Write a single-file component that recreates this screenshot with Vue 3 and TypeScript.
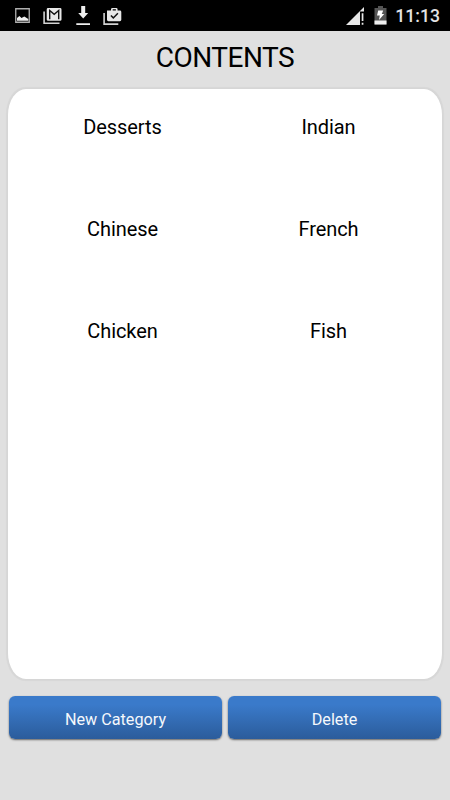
<script setup lang="ts">
const categories: string[] = ['Desserts', 'Indian', 'Chinese', 'French', 'Chicken', 'Fish']
const actions: string[] = ['New Category', 'Delete']
</script>

<template>
  <div class="screen">
    <header class="status">
      <div class="notifications">
        <svg width="16" height="16" viewBox="0 0 16 16">
          <path d="M.75 .75h13.5v13.5H.75z" fill="none" stroke="#b0b0b0" stroke-width="1.3" />
          <path d="M2 12.700V10l2.400-2 2.100 2 2.800-1.500 4 2.500v1.700z" fill="#eee" />
        </svg>
        <svg width="19" height="18" viewBox="0 0 19 18">
          <path d="M1.100 3.500V15.200H16.500" fill="none" stroke="#d2d2d2" stroke-width="1.6" />
          <path d="M3.700 1.500q0-1.400 1.400-1.400h12q1.400 0 1.400 1.400v9.900q0 1.400-1.400 1.400H5.100q-1.400 0-1.400-1.400z" fill="#e8e8e8" />
          <path d="M6.700 11.200V2.500l4.500 3.800 4.500-3.800v8.700" fill="none" stroke="#111" stroke-width="1.4" />
        </svg>
        <svg width="15" height="20" viewBox="0 0 15 20">
          <path d="M5.200 1h4v7h3l-5 5.500-5-5.500h3zM.3 18.300h13.700v1.700H.3z" fill="#eee" />
        </svg>
        <svg width="19" height="19" viewBox="0 0 19 19">
          <path d="M1.100 5V16.100h14.200" fill="none" stroke="#d2d2d2" stroke-width="1.6" />
          <path fill-rule="evenodd" d="M4 2.500h4V1.400Q8 0 9.400 0h3.800q1.400 0 1.400 1.400v1.100h2.300q1.400 0 1.400 1.400v7.900q0 1.400-1.400 1.400H5.400Q4 13.200 4 11.800zM9.700 2.500h3.200V1.300H9.700z" fill="#e8e8e8" />
          <path d="m7.900 7.500 2.400 2.400 4.600-4.700" fill="none" stroke="#111" stroke-width="1.5" />
        </svg>
      </div>
      <div class="system">
        <svg class="signal" width="19" height="18" viewBox="0 0 19 18">
          <path d="M0 18 18 0v4.500h-4V18z" fill="#e8e8e8" />
          <path d="M15.700 6.300h1.700v7.800h-1.700zm0 9.500h1.700v2h-1.700z" fill="#e8e8e8" />
        </svg>
        <svg class="battery" width="13" height="19" viewBox="0 0 13 19">
          <path d="M.5 2H4V0h5v2h3.500v16.500H.5z" fill="#555" />
          <path d="M.5 14.500h12v4H.5z" fill="#eee" />
          <path d="M4.200 4.500h5L7.800 8h2.400L5 14l.8-4.500H3z" fill="#fff" />
        </svg>
        <span class="time">11:13</span>
      </div>
    </header>

    <h1>CONTENTS</h1>

    <main class="panel">
      <button v-for="name in categories" :key="name" class="category">{{ name }}</button>
    </main>

    <footer class="actions">
      <button v-for="label in actions" :key="label" class="action">{{ label }}</button>
    </footer>
  </div>
</template>

<style>
body {
  margin: 0;
  background: #e0e0e0;
}
</style>

<style scoped>
.screen {
  box-sizing: border-box;
  width: 450px;
  height: 800px;
  display: flex;
  flex-direction: column;
  overflow: hidden;
  background: #e0e0e0;
  font-family: Roboto, sans-serif;
}
.status {
  box-sizing: border-box;
  height: 31px;
  flex: none;
  display: flex;
  justify-content: space-between;
  padding: 0 10px 0 15px;
  background: #000;
}
.notifications {
  display: flex;
  align-items: flex-start;
  padding-top: 8px;
}
.notifications svg:nth-child(2) {
  margin-left: 12px;
}
.notifications svg:nth-child(3) {
  margin: -3px 0 0 14px;
}
.notifications svg:nth-child(4) {
  margin-left: 12px;
}
.system {
  display: flex;
  align-items: flex-start;
}
.signal {
  margin-top: 7px;
}
.battery {
  margin: 6px 0 0 9px;
}
.time {
  margin-left: 8px;
  color: #e4e4e4;
  font-size: 17.6px;
  font-weight: 500;
  line-height: 33px;
}
h1 {
  flex: none;
  height: 58px;
  margin: 0;
  color: #000;
  font-size: 28px;
  font-weight: 400;
  line-height: 54px;
  letter-spacing: -0.5px;
  text-align: center;
}
.panel {
  box-sizing: border-box;
  flex: none;
  height: 590px;
  margin: 0 8px;
  padding: 0 11px;
  display: grid;
  grid-template-columns: 1fr 1fr;
  grid-auto-rows: 102px;
  align-content: start;
  border-radius: 18px / 26px;
  background: #fff;
  box-shadow: 0 0 1px 1.5px rgba(0, 0, 0, 0.045);
}
.category {
  align-self: start;
  height: 76px;
  margin: 0;
  padding: 0 0 0 1px;
  border: 0;
  background: none;
  color: #000;
  font: 400 20px/76px Roboto, sans-serif;
  letter-spacing: -0.1px;
}
.actions {
  display: flex;
  gap: 6px;
  margin: 17px 9px 0;
}
.action {
  flex: 1;
  box-sizing: border-box;
  height: 43px;
  margin: 0;
  padding: 5px 0 0;
  border: 0;
  border-radius: 6px;
  background: linear-gradient(#3a7aca 0%, #3a7aca 20%, #2b5c9b 100%);
  box-shadow: 0 1px 2px rgba(0, 0, 0, 0.55);
  color: #f5f8fc;
  font: 400 16.2px/38px Roboto, sans-serif;
}
</style>
